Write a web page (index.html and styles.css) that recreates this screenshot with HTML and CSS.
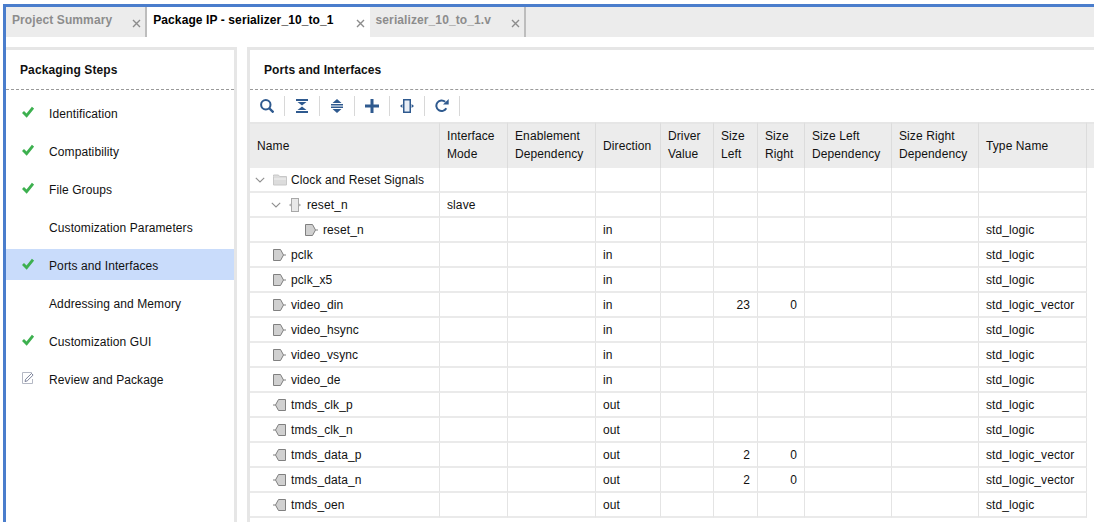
FILE: index.html
```html
<!DOCTYPE html>
<html lang="en">
<head>
  <meta charset="UTF-8" />
  <title>Package IP - serializer_10_to_1</title>
  <link rel="stylesheet" href="styles.css">
</head>
<body>
  <svg class="sprites" width="0" height="0">
    <symbol id="i-close" viewBox="0 0 9 9"><path d="M1 1l7 7M8 1L1 8" fill="none" stroke="#8c8c8c" stroke-width="1.4"/></symbol>
    <symbol id="i-check" viewBox="0 0 12 11"><path d="M1 5.5l3.6 3.6L11 1.2" fill="none" stroke="#3db04f" stroke-width="2.8"/></symbol>
    <symbol id="i-edit" viewBox="0 0 12 12"><path d="M.5.5h9v2M.5.5v11h10V7" fill="none" stroke="#b4b8c4"/><path d="M3 9.5l.6-2.2L9.500 1.500l1.600 1.600-5.900 5.800z" fill="#fff" stroke="#6f7690" stroke-width=".9"/></symbol>
    <symbol id="i-chevron" viewBox="0 0 10 6"><path d="M.8.8L5 5l4.200-4.200" fill="none" stroke="#8f8f8f" stroke-width="1.100"/></symbol>
    <symbol id="i-folder" viewBox="0 0 14 12"><path d="M.5 2.500V1h5l1 1.500h7V11H.5z" fill="#dcdcdc" stroke="#c8c8c8"/><path d="M1 5h12" stroke="#f2f2f2"/></symbol>
    <symbol id="i-iface" viewBox="0 0 12 14"><rect x="2.500" y=".5" width="7" height="13" fill="#e8e8e8" stroke="#a8a8a8"/><path d="M1.800 5.500v3L0 7zM10.200 5.500v3L12 7z" fill="#a0a0a0"/></symbol>
    <symbol id="i-in" viewBox="0 0 13 12"><path d="M.5.5h7l3 5.500-3 5.500h-7z" fill="#d0d0d0" stroke="#808080"/><path d="M10.500 6H13" stroke="#808080"/></symbol>
    <symbol id="i-out" viewBox="0 0 13 12"><path d="M12.500.5h-7l-3 5.500 3 5.500h7z" fill="#d0d0d0" stroke="#808080"/><path d="M2.500 6H0" stroke="#808080"/></symbol>
    <symbol id="t-search" viewBox="0 0 14 14"><circle cx="5.800" cy="5.800" r="4.700" fill="none" stroke="#2f5a8f" stroke-width="2"/><path d="M9 9l4.500 4.500" stroke="#2f5a8f" stroke-width="2.400"/></symbol>
    <symbol id="t-collapse" viewBox="0 0 12 14"><path d="M0 0h12v2H0zM0 12h12v2H0zM1.500 3h9L6 6.600zM1.500 11h9L6 7.400z" fill="#2f5a8f"/></symbol>
    <symbol id="t-expand" viewBox="0 0 12 14"><path d="M1.500 4L6 0l4.500 4zM1.500 10L6 14l4.500-4zM0 5h12v1.500H0zM0 7.500h12V9H0z" fill="#2f5a8f"/></symbol>
    <symbol id="t-plus" viewBox="0 0 14 14"><path d="M7 0v14M0 7h14" stroke="#2f5a8f" stroke-width="3"/></symbol>
    <symbol id="t-iface" viewBox="0 0 14 14"><rect x="3.750" y=".75" width="6.500" height="12.500" fill="#e8eef6" stroke="#2f5a8f" stroke-width="1.500"/><path d="M2.400 5v4L0 7zM11.600 5v4L14 7z" fill="#2f5a8f"/></symbol>
    <symbol id="t-refresh" viewBox="0 0 14 14"><path d="M11.300 9.300A5.300 5.300 0 1 1 10.200 2.800" fill="none" stroke="#2f5a8f" stroke-width="2"/><path d="M8 5.400h5.700V0z" fill="#2f5a8f"/></symbol>
  </svg>

  <div class="ventana">
    <div class="tabs">
      <div class="tab">Project Summary<svg class="tab-close"><use href="#i-close"/></svg></div>
      <div class="tab activa">Package IP - serializer_10_to_1<svg class="tab-close"><use href="#i-close"/></svg></div>
      <div class="tab">serializer_10_to_1.v<svg class="tab-close"><use href="#i-close"/></svg></div>
    </div>

    <div class="contenido">
      <aside class="pasos">
        <div class="panel-titulo">Packaging Steps</div>
        <ul class="lista-pasos">
          <li><svg class="paso-icono"><use href="#i-check"/></svg>Identification</li>
          <li><svg class="paso-icono"><use href="#i-check"/></svg>Compatibility</li>
          <li><svg class="paso-icono"><use href="#i-check"/></svg>File Groups</li>
          <li><span class="paso-icono"></span>Customization Parameters</li>
          <li class="sel"><svg class="paso-icono"><use href="#i-check"/></svg>Ports and Interfaces</li>
          <li><span class="paso-icono"></span>Addressing and Memory</li>
          <li><svg class="paso-icono"><use href="#i-check"/></svg>Customization GUI</li>
          <li><svg class="paso-icono"><use href="#i-edit"/></svg>Review and Package</li>
        </ul>
      </aside>

      <main class="puertos">
        <div class="panel-titulo">Ports and Interfaces</div>
        <div class="toolbar">
          <span class="tool"><svg class="t14"><use href="#t-search"/></svg></span>
          <span class="tool"><svg class="t12"><use href="#t-collapse"/></svg></span>
          <span class="tool"><svg class="t12"><use href="#t-expand"/></svg></span>
          <span class="tool"><svg class="t14"><use href="#t-plus"/></svg></span>
          <span class="tool"><svg class="t14"><use href="#t-iface"/></svg></span>
          <span class="tool"><svg class="t14"><use href="#t-refresh"/></svg></span>
        </div>

        <table class="tabla">
          <colgroup>
            <col class="c-name"><col class="c-mode"><col class="c-enable"><col class="c-dir"><col class="c-driver">
            <col class="c-left"><col class="c-right"><col class="c-dep"><col class="c-dep"><col class="c-type"><col>
          </colgroup>
          <thead>
            <tr>
              <th class="uno">Name</th>
              <th>Interface<br>Mode</th>
              <th>Enablement<br>Dependency</th>
              <th class="uno">Direction</th>
              <th>Driver<br>Value</th>
              <th>Size<br>Left</th>
              <th>Size<br>Right</th>
              <th>Size Left<br>Dependency</th>
              <th>Size Right<br>Dependency</th>
              <th class="uno">Type Name</th>
              <th class="resto"></th>
            </tr>
          </thead>
          <tbody>
            <tr><td><div class="nodo n0"><svg class="chev"><use href="#i-chevron"/></svg><svg class="folder"><use href="#i-folder"/></svg>Clock and Reset Signals</div></td><td></td><td></td><td></td><td></td><td></td><td></td><td></td><td></td><td></td><td class="resto"></td></tr>
            <tr><td><div class="nodo n1"><svg class="chev"><use href="#i-chevron"/></svg><svg class="iface"><use href="#i-iface"/></svg>reset_n</div></td><td>slave</td><td></td><td></td><td></td><td></td><td></td><td></td><td></td><td></td><td class="resto"></td></tr>
            <tr><td><div class="nodo n2"><svg class="port"><use href="#i-in"/></svg>reset_n</div></td><td></td><td></td><td>in</td><td></td><td></td><td></td><td></td><td></td><td>std_logic</td><td class="resto"></td></tr>
            <tr><td><div class="nodo n3"><svg class="port"><use href="#i-in"/></svg>pclk</div></td><td></td><td></td><td>in</td><td></td><td></td><td></td><td></td><td></td><td>std_logic</td><td class="resto"></td></tr>
            <tr><td><div class="nodo n3"><svg class="port"><use href="#i-in"/></svg>pclk_x5</div></td><td></td><td></td><td>in</td><td></td><td></td><td></td><td></td><td></td><td>std_logic</td><td class="resto"></td></tr>
            <tr><td><div class="nodo n3"><svg class="port"><use href="#i-in"/></svg>video_din</div></td><td></td><td></td><td>in</td><td></td><td class="num">23</td><td class="num">0</td><td></td><td></td><td>std_logic_vector</td><td class="resto"></td></tr>
            <tr><td><div class="nodo n3"><svg class="port"><use href="#i-in"/></svg>video_hsync</div></td><td></td><td></td><td>in</td><td></td><td></td><td></td><td></td><td></td><td>std_logic</td><td class="resto"></td></tr>
            <tr><td><div class="nodo n3"><svg class="port"><use href="#i-in"/></svg>video_vsync</div></td><td></td><td></td><td>in</td><td></td><td></td><td></td><td></td><td></td><td>std_logic</td><td class="resto"></td></tr>
            <tr><td><div class="nodo n3"><svg class="port"><use href="#i-in"/></svg>video_de</div></td><td></td><td></td><td>in</td><td></td><td></td><td></td><td></td><td></td><td>std_logic</td><td class="resto"></td></tr>
            <tr><td><div class="nodo n3"><svg class="port"><use href="#i-out"/></svg>tmds_clk_p</div></td><td></td><td></td><td>out</td><td></td><td></td><td></td><td></td><td></td><td>std_logic</td><td class="resto"></td></tr>
            <tr><td><div class="nodo n3"><svg class="port"><use href="#i-out"/></svg>tmds_clk_n</div></td><td></td><td></td><td>out</td><td></td><td></td><td></td><td></td><td></td><td>std_logic</td><td class="resto"></td></tr>
            <tr><td><div class="nodo n3"><svg class="port"><use href="#i-out"/></svg>tmds_data_p</div></td><td></td><td></td><td>out</td><td></td><td class="num">2</td><td class="num">0</td><td></td><td></td><td>std_logic_vector</td><td class="resto"></td></tr>
            <tr><td><div class="nodo n3"><svg class="port"><use href="#i-out"/></svg>tmds_data_n</div></td><td></td><td></td><td>out</td><td></td><td class="num">2</td><td class="num">0</td><td></td><td></td><td>std_logic_vector</td><td class="resto"></td></tr>
            <tr><td><div class="nodo n3"><svg class="port"><use href="#i-out"/></svg>tmds_oen</div></td><td></td><td></td><td>out</td><td></td><td></td><td></td><td></td><td></td><td>std_logic</td><td class="resto"></td></tr>
          </tbody>
        </table>
      </main>
    </div>
  </div>
</body>
</html>
```

FILE: styles.css
```css
:root {
  --azul: #4a7dcc;
  --gris: #e6e6e6;
  --cabecera: #ececec;
  --linea: #e4e4e4;
  --texto: #111;
}

html, body {
  height: 100%;
}

body {
  font-family: 'Liberation Sans', Arial, sans-serif;
  font-size: 12px;
  letter-spacing: .1px;
  color: var(--texto);
  background: #fff;
  margin: 0;
  overflow: hidden;
}

.sprites {
  position: absolute;
}

.ventana {
  height: 518px;
  margin: 4px 0 0 3px;
  border-top: 3px solid var(--azul);
  border-left: 3px solid var(--azul);
  overflow: hidden;
}

/* pestañas */
.tabs {
  display: flex;
  height: 30px;
  background: var(--cabecera);
}

.tab {
  display: flex;
  align-items: center;
  padding: 0 4px 4px 6px;
  font-weight: bold;
  color: #8c8c8c;
  border-right: 2px solid #bdbdbd;
}

.tab.activa {
  background: #fff;
  color: #000;
  border-right: none;
  padding-right: 5px;
}

.tab-close {
  width: 9px;
  height: 9px;
  margin: 6px 0 0 20px;
}

.tab.activa .tab-close {
  margin-left: 22px;
}

.contenido {
  display: flex;
  gap: 10px;
  padding-top: 10px;
  height: 478px;
}

/* paneles */
.panel-titulo {
  height: 39px;
  line-height: 41px;
  font-weight: bold;
  padding-left: 14px;
  border-bottom: 1px dashed #9a9a9a;
}

.pasos {
  width: 228px;
  flex: none;
  border-top: 3px solid var(--gris);
  border-right: 3px solid var(--gris);
}

.lista-pasos {
  list-style: none;
  margin: 0;
  padding: 7px 0 0;
}

.lista-pasos li {
  display: flex;
  align-items: center;
  box-sizing: border-box;
  height: 31px;
  margin-bottom: 7px;
  padding: 2px 0 0 16px;
}

.lista-pasos li.sel {
  background: #c9dcfb;
}

.paso-icono {
  width: 12px;
  height: 12px;
  margin: -3px 15px 0 0;
  flex: none;
}

.puertos {
  flex: 1;
  min-width: 0;
  border-top: 3px solid var(--gris);
  border-left: 3px solid var(--gris);
}

.toolbar {
  display: flex;
  align-items: center;
  height: 32px;
}

.tool {
  display: flex;
  align-items: center;
  justify-content: center;
  width: 34px;
  height: 20px;
  border-right: 1px solid #d8d8d8;
}

.t14 {
  width: 14px;
  height: 14px;
}

.t12 {
  width: 12px;
  height: 14px;
}

/* tabla */
.tabla {
  table-layout: fixed;
  width: 844px;
  border-collapse: separate;
  border-spacing: 0;
}

.c-name { width: 190px; }
.c-mode { width: 68px; }
.c-enable { width: 88px; }
.c-dir { width: 65px; }
.c-driver { width: 53px; }
.c-left { width: 44px; }
.c-right { width: 47px; }
.c-dep { width: 87px; }
.c-type { width: 108px; }

.tabla th {
  height: 42px;
  padding: 0 7px 2px;
  font-weight: normal;
  line-height: 18px;
  text-align: left;
  white-space: nowrap;
  background: var(--cabecera);
  border-top: 2px solid var(--gris);
  border-right: 1px solid #dcdcdc;
}

.tabla th.uno {
  padding-bottom: 0;
  height: 44px;
}

.tabla td {
  height: 23px;
  padding: 0 7px;
  white-space: nowrap;
  border-right: 1px solid var(--linea);
  border-bottom: 2px solid #eaeaea;
}

.tabla td.num {
  text-align: right;
}

.tabla .resto {
  border-right: none;
}

.tabla td.resto {
  border-bottom: none;
}

.nodo {
  display: flex;
  align-items: center;
  margin-left: -7px;
}

.n0 { padding-left: 5px; }
.n1 { padding-left: 21px; }
.n2 { padding-left: 55px; }
.n3 { padding-left: 23px; }

.chev {
  width: 10px;
  height: 6px;
  margin-right: 8px;
}

.folder {
  width: 14px;
  height: 12px;
  margin-right: 4px;
}

.iface {
  width: 12px;
  height: 14px;
  margin-right: 6px;
}

.port {
  width: 13px;
  height: 12px;
  margin-right: 5px;
}
```
